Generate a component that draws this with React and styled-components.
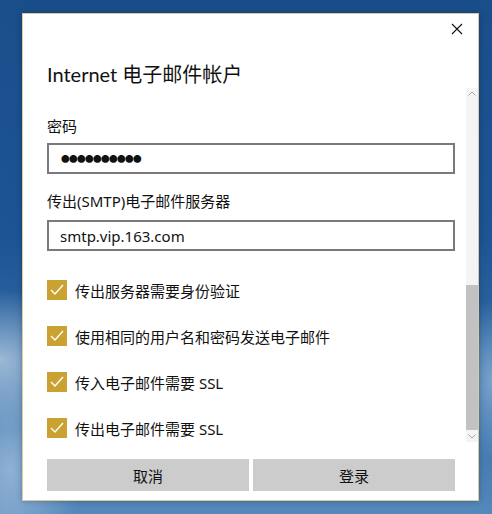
import React from 'react';
import styled, { createGlobalStyle } from 'styled-components';

const color = {
  gold: '#c9a232',
  field: '#7a7a7a',
  button: '#cccccc',
  thumb: '#c2c2c2',
  track: '#f4f4f4',
}

const GlobalStyle = createGlobalStyle`
  html, body {
    margin: 0;
    padding: 0;
  }
  body {
    font-family: "Noto Sans", "Noto Sans CJK SC", sans-serif;
  }
`

const Desktop = styled.div`
  width: 492px;
  height: 514px;
  box-sizing: border-box;
  padding: 13px 0 0 22px;
  overflow: hidden;
  background:
    radial-gradient(ellipse 90px 70px at 0px 360px, rgba(190, 210, 230, 0.75), rgba(190, 210, 230, 0) 100%),
    radial-gradient(ellipse 70px 120px at 10px 470px, rgba(160, 190, 220, 0.8), rgba(160, 190, 220, 0) 100%),
    radial-gradient(ellipse 40px 80px at 492px 380px, rgba(150, 185, 220, 0.7), rgba(150, 185, 220, 0) 100%),
    linear-gradient(to bottom, #1a4e8b 0%, #1c5494 45%, #3a72ab 80%, #5588bb 100%);
`

const Dialog = styled.div`
  width: 457px;
  height: 488px;
  box-sizing: border-box;
  background: white;
  border: 1px solid #d8cc9c;
  display: flex;
  flex-direction: column;
  box-shadow: 0 0 6px rgba(0, 0, 0, 0.25);
`

const Header = styled.div`
  height: 74px;
  position: relative;
  padding-left: 24px;
  box-sizing: border-box;
  display: flex;
  align-items: flex-end;
  padding-bottom: 2px;
`

const Title = styled.h1`
  margin: 0;
  font-family: Lato, "Noto Sans CJK SC", sans-serif;
  font-size: 20px;
  font-weight: normal;
  line-height: 24px;
  color: #111;
`

const Close = styled.button`
  position: absolute;
  top: 9px;
  right: 15px;
  width: 12px;
  height: 12px;
  padding: 0;
  border: none;
  background: none;
  display: flex;
`

const Body = styled.div`
  height: 354px;
  display: flex;
`

const Content = styled.div`
  flex: 1;
  padding: 28px 11px 0 24px;
  box-sizing: border-box;
  overflow: hidden;
`

const Label = styled.div`
  font-size: 15px;
  line-height: 20px;
  color: #111;
  margin-top: ${props => props.top || 0}px;
`

const Field = styled.div`
  height: 31px;
  box-sizing: border-box;
  border: 2px solid ${color.field};
  margin-top: ${props => props.top || 0}px;
  padding-left: ${props => props.dots ? 12 : 11}px;
  display: flex;
  align-items: center;
  font-size: ${props => props.dots ? '8.6px' : '15px'};
  letter-spacing: ${props => props.dots ? '-0.6px' : '0'};
  color: #111;
`

const Options = styled.div`
  margin-top: 29px;
  display: flex;
  flex-direction: column;
  gap: 26px;
`

const Option = styled.div`
  display: flex;
  align-items: center;
  gap: 8px;
  height: 20px;
  font-size: 15px;
  color: #111;
`

const Box = styled.div`
  width: 20px;
  height: 20px;
  background: ${color.gold};
  display: flex;
  align-items: center;
  justify-content: center;
  flex: none;
`

const Scrollbar = styled.div`
  width: 12px;
  background: ${color.track};
  display: flex;
  flex-direction: column;
  align-items: center;
`

const Arrow = styled.div`
  height: 12px;
  display: flex;
  align-items: center;
  justify-content: center;
`

const Thumb = styled.div`
  width: 100%;
  height: 148px;
  background: ${color.thumb};
  margin-top: ${props => props.top}px;
`

const Footer = styled.div`
  flex: 1;
  padding: 17px 23px 0 24px;
  display: flex;
  gap: 4px;
`

const Button = styled.button`
  flex: 1;
  height: 32px;
  border: none;
  background: ${color.button};
  font-family: inherit;
  font-size: 15px;
  color: #111;
  padding: 0;
`

const Check = () => (
  <svg width="14" height="12" viewBox="0 0 14 12">
    <polyline points="1,6 5,10 13,1" fill="none" stroke="white" strokeWidth="1.4" />
  </svg>
)

const Chevron = ({ up }) => (
  <svg width="8" height="5" viewBox="0 0 8 5">
    <polyline points={up ? '0.5,4.5 4,1 7.5,4.5' : '0.5,0.5 4,4 7.5,0.5'} fill="none" stroke="#a6a6a6" strokeWidth="1" />
  </svg>
)

const options = [
  '传出服务器需要身份验证',
  '使用相同的用户名和密码发送电子邮件',
  '传入电子邮件需要 SSL',
  '传出电子邮件需要 SSL',
]

export default function App() {
  return (
    <>
      <GlobalStyle />
      <Desktop>
        <Dialog>
          <Header>
            <Title>Internet 电子邮件帐户</Title>
            <Close aria-label="关闭">
              <svg width="12" height="12" viewBox="0 0 12 12">
                <path d="M1 1 L11 11 M11 1 L1 11" stroke="#111" strokeWidth="1.1" />
              </svg>
            </Close>
          </Header>
          <Body>
            <Content>
              <Label>密码</Label>
              <Field top={7} dots>●●●●●●●●●●</Field>
              <Label top={17}>传出(SMTP)电子邮件服务器</Label>
              <Field top={9}>smtp.vip.163.com</Field>
              <Options>
                {options.map(text => (
                  <Option key={text}>
                    <Box><Check /></Box>
                    <span>{text}</span>
                  </Option>
                ))}
              </Options>
            </Content>
            <Scrollbar>
              <Arrow><Chevron up /></Arrow>
              <Thumb top={185} />
              <Arrow><Chevron /></Arrow>
            </Scrollbar>
          </Body>
          <Footer>
            <Button>取消</Button>
            <Button>登录</Button>
          </Footer>
        </Dialog>
      </Desktop>
    </>
  )
}
